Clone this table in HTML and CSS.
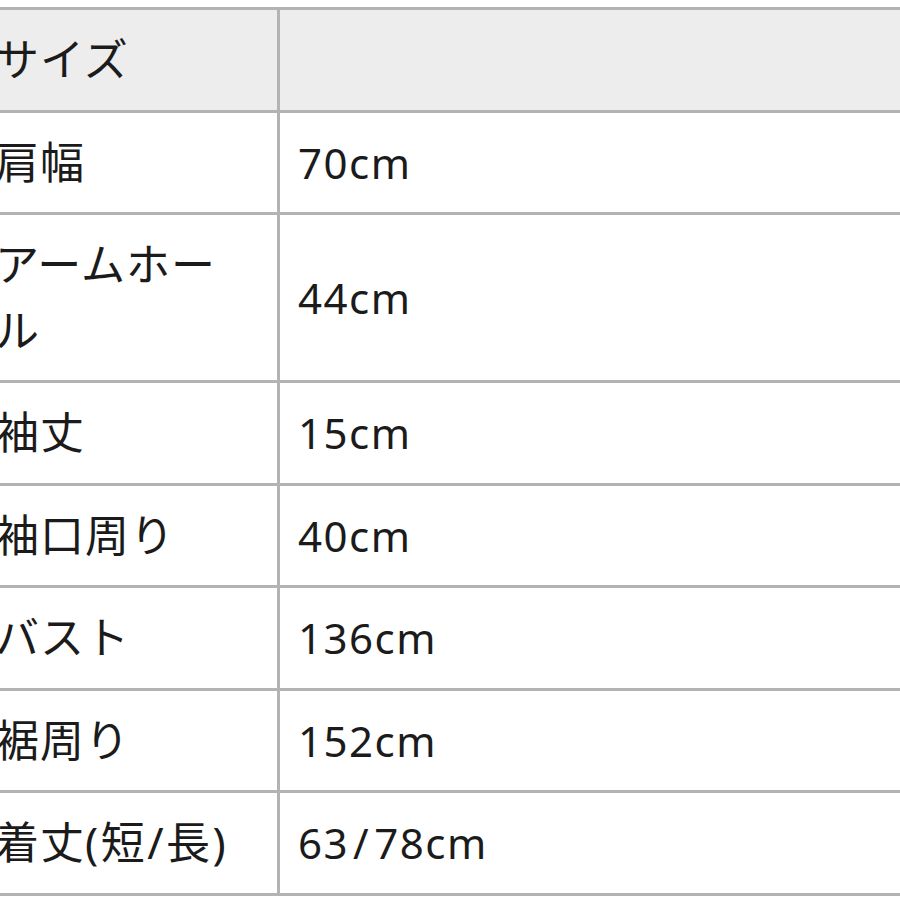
FILE: index.html
```html
<!DOCTYPE html>
<html lang="ja">
<head>
<meta charset="utf-8">
<link rel="stylesheet" href="styles.css">
</head>
<body>
<div class="wrap">
<table class="size-table">
  <tr class="head">
    <th class="label">サイズ</th>
    <th class="value"></th>
  </tr>
  <tr><td class="label">肩幅</td><td class="value">70cm</td></tr>
  <tr><td class="label">アームホール</td><td class="value">44cm</td></tr>
  <tr><td class="label">袖丈</td><td class="value">15cm</td></tr>
  <tr><td class="label">袖口周り</td><td class="value">40cm</td></tr>
  <tr><td class="label">バスト</td><td class="value">136cm</td></tr>
  <tr><td class="label">裾周り</td><td class="value">152cm</td></tr>
  <tr><td class="label">着丈<span class="wide">(短/長)</span></td><td class="value">63<span class="slash">/</span>78cm</td></tr>
</table>
</div>
</body>
</html>
```

FILE: styles.css
```css
html, body {
  margin: 0;
  padding: 0;
  background: #ffffff;
  overflow: hidden;
}

.wrap {
  padding-top: 7px;
  width: 900px;
  height: 900px;
  overflow: hidden;
}

.size-table {
  margin-left: -29px;
  width: 1000px;
  border-collapse: separate;
  border-spacing: 0;
  border-top: 3px solid #b3b3b3;
  border-left: 3px solid #b3b3b3;
  table-layout: fixed;
  font-family: "Noto Sans", "Noto Sans CJK JP", sans-serif;
  line-height: 65.5px;
  color: #1b1b1b;
}

.size-table th,
.size-table td {
  border-right: 3px solid #b3b3b3;
  border-bottom: 3px solid #b3b3b3;
  padding: 17px 18px;
  text-align: left;
  font-weight: normal;
  vertical-align: middle;
}

.size-table .label {
  width: 250px;
  padding-left: 21px;
  padding-right: 32px;
  font-size: 44px;
  letter-spacing: 1px;
}

.size-table .value {
  font-size: 42px;
  letter-spacing: 1.5px;
}

.size-table .head th {
  background: #ededed;
}

.wide {
  letter-spacing: 2.5px;
}

.slash {
  padding: 0 4px;
}
```
